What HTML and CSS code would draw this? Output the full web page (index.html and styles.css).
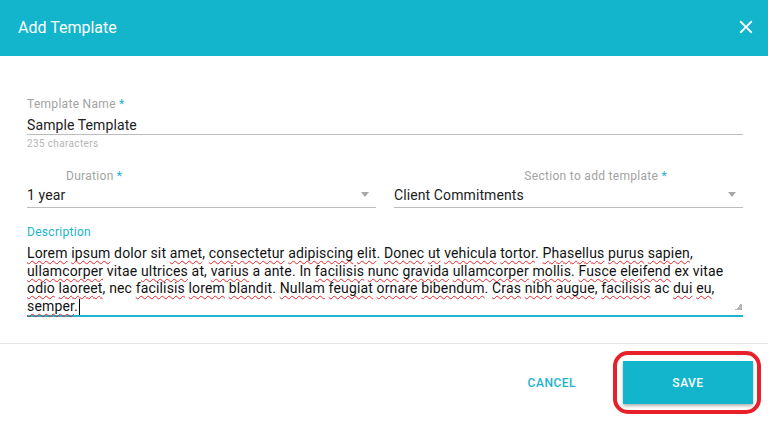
FILE: index.html
```html
<!DOCTYPE html>
<html lang="en">

<head>
    <meta charset="UTF-8">
    <meta name="viewport" content="width=device-width, initial-scale=1.0">
    <title>Add Template</title>
    <link rel="stylesheet" href="styles.css">
</head>

<body>
    <div class="dialog">
        <header class="dialog-header">
            <h1 class="dialog-title">Add Template</h1>
            <button class="close-btn" aria-label="Close">
                <svg width="22" height="22" viewBox="0 0 24 24">
                    <path fill="#fff" d="M19 6.41L17.59 5 12 10.59 6.41 5 5 6.41 10.59 12 5 17.59 6.41 19 12 13.41 17.59 19 19 17.59 13.41 12z"/>
                </svg>
            </button>
        </header>

        <div class="dialog-body">
            <div class="field">
                <label class="field-label">Template Name <span class="req">*</span></label>
                <div class="field-input">Sample Template</div>
                <div class="field-hint">235 characters</div>
            </div>

            <div class="field-row">
                <div class="field select-field">
                    <label class="field-label label-left">Duration <span class="req">*</span></label>
                    <div class="select-value">
                        <span>1 year</span>
                        <span class="arrow"></span>
                    </div>
                </div>
                <div class="field select-field">
                    <label class="field-label label-right">Section to add template <span class="req">*</span></label>
                    <div class="select-value">
                        <span>Client Commitments</span>
                        <span class="arrow"></span>
                    </div>
                </div>
            </div>

            <div class="field desc-field">
                <label class="field-label active">Description</label>
                <div class="desc-text"><span class="sp">Lorem</span> <span class="sp">ipsum</span> dolor sit <span class="sp">amet</span>, <span class="sp">consectetur</span> <span class="sp">adipiscing</span> <span class="sp">elit</span>. <span class="sp">Donec</span> <span class="sp">ut</span> <span class="sp">vehicula</span> <span class="sp">tortor</span>. <span class="sp">Phasellus</span> <span class="sp">purus</span> <span class="sp">sapien</span>, <span class="sp">ullamcorper</span> vitae <span class="sp">ultrices</span> at, <span class="sp">varius</span> a ante. In <span class="sp">facilisis</span> <span class="sp">nunc</span> <span class="sp">gravida</span> <span class="sp">ullamcorper</span> <span class="sp">mollis</span>. <span class="sp">Fusce</span> <span class="sp">eleifend</span> ex vitae <span class="sp">odio</span> <span class="sp">laoreet</span>, nec <span class="sp">facilisis</span> <span class="sp">lorem</span> <span class="sp">blandit</span>. <span class="sp">Nullam</span> <span class="sp">feugiat</span> <span class="sp">ornare</span> <span class="sp">bibendum</span>. <span class="sp">Cras</span> <span class="sp">nibh</span> <span class="sp">augue</span>, <span class="sp">facilisis</span> ac <span class="sp">dui</span> <span class="sp">eu</span>, <span class="sp">semper</span>.<span class="caret"></span></div>
                <span class="grip"></span>
            </div>
        </div>

        <footer class="dialog-footer">
            <button class="btn-cancel">CANCEL</button>
            <div class="save-wrap">
                <button class="btn-save">SAVE</button>
                <span class="highlight"></span>
            </div>
        </footer>
    </div>
</body>

</html>
```

FILE: styles.css
```css
body {
    margin: 0;
    padding: 0;
    background-color: #fff;
    font-family: Roboto, "Liberation Sans", Arial, sans-serif;
    color: #212121;
}

.dialog {
    width: 768px;
    height: 421px;
    overflow: hidden;
}

.dialog-header {
    height: 56px;
    background-color: #12b5cb;
    display: flex;
    align-items: center;
    justify-content: space-between;
    padding: 0 11px 0 18px;
}

.dialog-title {
    margin: 0;
    font-size: 16px;
    font-weight: 400;
    line-height: 56px;
    color: #fff;
}

.close-btn {
    border: none;
    background: none;
    padding: 0;
    width: 22px;
    height: 22px;
    margin-bottom: 3px;
    cursor: pointer;
}

.close-btn svg {
    display: block;
}

.dialog-body {
    padding: 41px 25px 26px 27px;
}

.field-label {
    display: block;
    font-size: 12px;
    line-height: 14px;
    letter-spacing: 0.3px;
    color: #a3a3a3;
}

.field-label.active {
    color: #22b3cc;
}

.req {
    color: #22b3cc;
}

.field-input {
    margin-top: 5px;
    font-size: 14px;
    line-height: 18px;
    letter-spacing: 0.1px;
    border-bottom: 1px solid #bdbdbd;
}

.field-hint {
    margin-top: 3px;
    font-size: 10px;
    line-height: 12px;
    letter-spacing: 0.35px;
    color: #b5b5b5;
}

.field-row {
    display: grid;
    grid-template-columns: 1fr 1fr;
    column-gap: 18px;
    margin-top: 19px;
}

.label-left {
    padding-left: 39px;
}

.label-right {
    text-align: right;
    padding-right: 76px;
}

.select-value {
    margin-top: 3px;
    display: flex;
    align-items: center;
    justify-content: space-between;
    font-size: 14px;
    line-height: 18px;
    letter-spacing: 0.1px;
    padding-bottom: 3px;
    border-bottom: 1px solid #bdbdbd;
}

.arrow {
    width: 0;
    height: 0;
    margin-right: 7px;
    margin-top: -2px;
    border-left: 4px solid transparent;
    border-right: 4px solid transparent;
    border-top: 5px solid #a8a8a8;
}

.desc-field {
    position: relative;
    margin-top: 17px;
}

.desc-text {
    margin-top: 6px;
    font-size: 14px;
    line-height: 17.5px;
    letter-spacing: 0.15px;
    color: #111;
    border-bottom: 2px solid #22b3cc;
}

.sp {
    text-decoration: underline wavy #e8262c;
    text-decoration-thickness: 1px;
    text-underline-offset: 2px;
    text-decoration-skip-ink: none;
}

.caret {
    display: inline-block;
    width: 1px;
    height: 16px;
    background-color: #000;
    vertical-align: -4px;
    margin-left: 1px;
}

.grip {
    position: absolute;
    right: 1px;
    bottom: 7px;
    width: 7px;
    height: 7px;
    background: linear-gradient(135deg, transparent 50%, #b5b5b5 50%);
}

.dialog-footer {
    border-top: 1px solid #e3e3e3;
    display: flex;
    justify-content: flex-end;
    align-items: center;
    padding: 17px 15px 0 0;
}

.btn-cancel {
    border: none;
    background: none;
    font-family: Roboto, "Liberation Sans", Arial, sans-serif;
    font-size: 12px;
    font-weight: 500;
    letter-spacing: 0.5px;
    color: #22b3cc;
    padding: 0 16px;
    height: 43px;
    margin-right: 31px;
}

.save-wrap {
    position: relative;
}

.btn-save {
    display: block;
    width: 130px;
    height: 43px;
    border: none;
    background-color: #12b5cb;
    color: #fff;
    font-family: Roboto, "Liberation Sans", Arial, sans-serif;
    font-size: 12px;
    font-weight: 500;
    letter-spacing: 0.5px;
    box-shadow: 0 2px 3px rgba(0, 0, 0, 0.3);
}

.highlight {
    position: absolute;
    left: -10px;
    right: -8px;
    top: -10px;
    bottom: -10px;
    border: 4px solid #e8202a;
    border-radius: 15px;
    pointer-events: none;
}
```
